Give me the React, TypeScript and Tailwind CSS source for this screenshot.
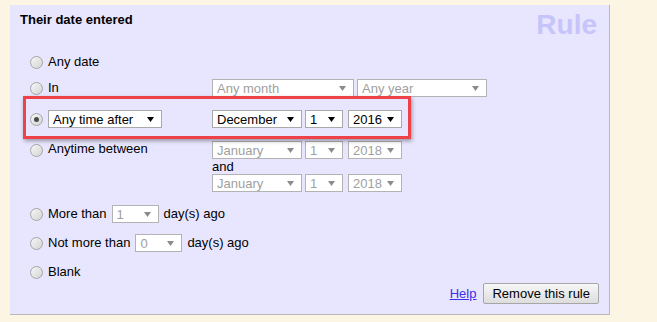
import React from "react";

function Radio({ checked = false }: { checked?: boolean }) {
  return (
    <span className="mr-[5px] flex h-[13px] w-[13px] shrink-0 items-center justify-center rounded-full border border-[#a5a5a5] bg-gradient-to-br from-[#f7f7f7] to-[#d4d4d4]">
      {checked && <span className="h-[5px] w-[5px] rounded-full bg-[#4a4a4a]" />}
    </span>
  );
}

function Select({
  value,
  className,
  disabled = false,
}: {
  value: string;
  className: string;
  disabled?: boolean;
}) {
  return (
    <div
      className={
        "flex h-[18px] shrink-0 items-center justify-between bg-white pl-[4px] pr-[7px] text-[13px] leading-none " +
        (disabled ? "border border-[#b3b3b3] text-[#a0a0a0] " : "border border-[#a9a9a9] text-black ") +
        className
      }
    >
      <span>{value}</span>
      <svg width="7" height="5" viewBox="0 0 7 5" className={disabled ? "text-[#8c8c8c]" : "text-black"}>
        <polygon points="0,0 7,0 3.5,5" fill="currentColor" />
      </svg>
    </div>
  );
}

function DateSelects({ month, year, disabled }: { month: string; year: string; disabled?: boolean }) {
  return (
    <div className="flex items-center">
      <Select value={month} className="w-[90px]" disabled={disabled} />
      <Select value="1" className="ml-[3px] w-[38px]" disabled={disabled} />
      <Select value={year} className="ml-[5px] w-[54px]" disabled={disabled} />
    </div>
  );
}

export default function App() {
  return (
    <main
      className="min-h-screen bg-[#fdf5e4] pl-[10px] pt-[5px] text-[13px] text-black"
      style={{ fontFamily: '"Liberation Sans", Arial, sans-serif' }}
    >
      <div className="relative flex h-[310px] w-[600px] flex-col border-b border-r border-[#b9b9b9] bg-[#e8e6fe]">
        {/* header */}
        <div className="flex h-[47px] items-start justify-between pl-[10px] pr-[12px]">
          <h2 className="mt-[7px] text-[13px] font-bold leading-[16px]">Their date entered</h2>
          <div className="mt-[6px] text-[28px] font-bold leading-[28px] text-[#c6c4fa]">Rule</div>
        </div>

        <div className="flex flex-col pl-[20px]">
          <div className="flex h-[20px] items-center">
            <Radio />
            <span>Any date</span>
          </div>

          <div className="mt-[6px] flex h-[20px] items-center">
            <div className="flex w-[182px] items-center">
              <Radio />
              <span>In</span>
            </div>
            <Select value="Any month" className="h-[17px] w-[142px]" disabled />
            <Select value="Any year" className="ml-[3px] h-[17px] w-[130px]" disabled />
          </div>

          <div className="mt-[11px] flex h-[20px] items-center">
            <div className="flex w-[182px] items-center">
              <Radio checked />
              <Select value="Any time after" className="w-[114px]" />
            </div>
            <DateSelects month="December" year="2016" />
          </div>

          <div className="mt-[11px] flex h-[20px] items-center">
            <div className="flex w-[182px] items-center">
              <Radio />
              <span className="-mt-[2px]">Anytime between</span>
            </div>
            <DateSelects month="January" year="2018" disabled />
          </div>
          <div className="flex h-[14px] items-center pl-[182px] leading-[14px]">and</div>
          <div className="flex h-[18px] items-center pl-[182px]">
            <DateSelects month="January" year="2018" disabled />
          </div>

          <div className="mt-[12px] flex h-[20px] items-center">
            <Radio />
            <span>More than</span>
            <Select value="1" className="ml-[5px] h-[17px] w-[47px]" disabled />
            <span className="ml-[5px]">day(s) ago</span>
          </div>

          <div className="mt-[9px] flex h-[20px] items-center">
            <Radio />
            <span>Not more than</span>
            <Select value="0" className="ml-[5px] h-[17px] w-[47px]" disabled />
            <span className="ml-[5px]">day(s) ago</span>
          </div>

          <div className="mt-[9px] flex h-[20px] items-center">
            <Radio />
            <span>Blank</span>
          </div>
        </div>

        {/* footer */}
        <div className="mt-[1px] flex h-[21px] items-center justify-end gap-[7px] pr-[10px]">
          <a href="#" className="text-[#3b2fe8] underline">
            Help
          </a>
          <button className="h-[21px] rounded-[2px] border border-[#a6a6a6] bg-gradient-to-b from-[#f7f7f7] to-[#dddddd] px-[8px] text-[13px] leading-none text-black">
            Remove this rule
          </button>
        </div>

        {/* annotation box */}
        <div className="pointer-events-none absolute left-[13px] top-[91px] h-[43px] w-[388px] border-[3px] border-[#ef4148] shadow-[1px_2px_4px_rgba(0,0,0,0.35)]" />
      </div>
    </main>
  );
}
